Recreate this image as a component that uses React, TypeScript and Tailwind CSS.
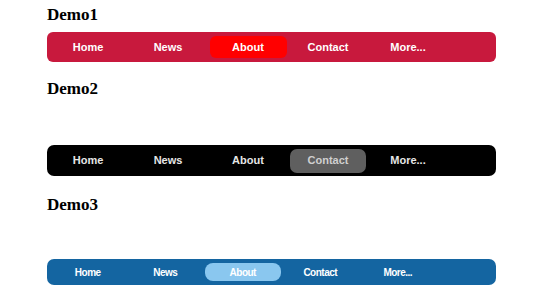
import React from "react";

const items = ["Home", "News", "About", "Contact", "More..."];

type Theme = {
  bar: string;
  item: string;
  link: string;
  active: string;
  inactive: string;
};

const themes: Record<string, Theme> = {
  demo1: {
    bar: "h-[30px] bg-[#c8193d] rounded-[6px] pl-[1px]",
    item: "w-[80px]",
    link: "w-[77px] h-[22px] rounded-[6px] text-[11px] font-bold",
    active: "bg-[#ff0000] text-white",
    inactive: "text-white",
  },
  demo2: {
    bar: "h-[31px] bg-black rounded-[7px] pl-[1px]",
    item: "w-[80px]",
    link: "w-[76px] h-[24px] rounded-[7px] text-[11px] font-bold",
    active: "bg-[#5f5f5f] text-[#cfcfcf]",
    inactive: "text-[#e6e6e6]",
  },
  demo3: {
    bar: "h-[26px] bg-[#1465a1] rounded-[7px] pl-[2px]",
    item: "w-[77.5px]",
    link: "w-[76px] h-[18px] rounded-[8px] text-[10px] font-bold tracking-[-0.5px]",
    active: "bg-[#8ac7ef] text-white",
    inactive: "text-white",
  },
};

function Menu({ theme, current }: { theme: Theme; current: string }) {
  return (
    <ul className={`flex items-center w-[449px] ${theme.bar}`}>
      {items.map((label) => (
        <li key={label} className={`flex justify-center ${theme.item}`}>
          <a
            href="#"
            className={`flex items-center justify-center ${theme.link} ${
              label === current ? theme.active : theme.inactive
            }`}
          >
            {label}
          </a>
        </li>
      ))}
    </ul>
  );
}

export default function App() {
  return (
    <div
      className="w-[560px] h-[300px] bg-white pl-[47px] pt-[4px]"
      style={{ fontFamily: '"Liberation Sans", Arial, sans-serif' }}
    >
      <h2 className="text-[17px] leading-[22px] font-bold text-black [font-family:'Liberation_Serif',serif]">Demo1</h2>
      <div className="mt-[6px]">
        <Menu theme={themes.demo1} current="About" />
      </div>

      <h2 className="mt-[16px] text-[17px] leading-[22px] font-bold text-black [font-family:'Liberation_Serif',serif]">Demo2</h2>
      <div className="mt-[45px]">
        <Menu theme={themes.demo2} current="Contact" />
      </div>

      <h2 className="mt-[18px] text-[17px] leading-[22px] font-bold text-black [font-family:'Liberation_Serif',serif]">Demo3</h2>
      <div className="mt-[43px]">
        <Menu theme={themes.demo3} current="About" />
      </div>
    </div>
  );
}
